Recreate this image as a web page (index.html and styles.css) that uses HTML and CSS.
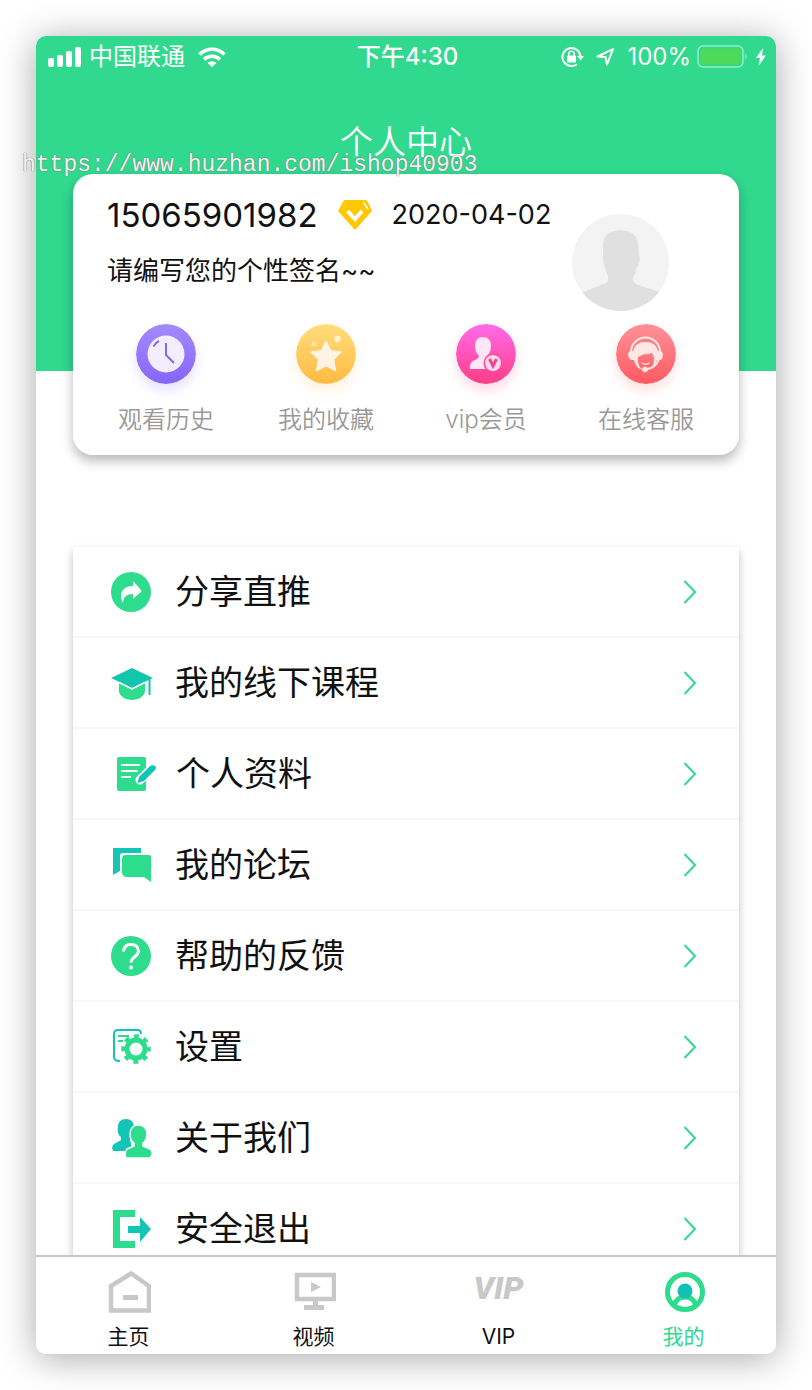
FILE: index.html
```
<!DOCTYPE html>
<html lang="zh-CN">
<head>
  <meta charset="UTF-8">
  <meta name="viewport" content="width=device-width, initial-scale=1.0">
  <title>个人中心</title>
  <link rel="stylesheet" href="styles.css">
</head>
<body>
  <div class="phone">
    <main class="content">
      <header class="header">
        <div class="status-bar">
          <div class="status-left">
            <svg width="34" height="20" viewBox="0 0 34 20" fill="#fff"><rect x="0" y="11" width="6" height="9" rx="2"/><rect x="9" y="8" width="6" height="12" rx="2"/><rect x="18" y="4" width="6" height="16" rx="2"/><rect x="27" y="0" width="6" height="20" rx="2"/></svg>
            <span>中国联通</span>
            <svg class="wifi" width="28" height="20" viewBox="0 0 28 20"><path d="M1.500 7.500a17.500 17.500 0 0 1 25 0M6 12.500a11.500 11.500 0 0 1 16 0" fill="none" stroke="#fff" stroke-width="3.600"/><path d="M9.500 16a6.500 6.500 0 0 1 9 0L14 20z" fill="#fff"/></svg>
          </div>
          <span class="time">下午4:30</span>
          <div class="status-right">
            <svg width="23" height="22" viewBox="0 0 23 22"><path d="M16 18.2A9 9 0 1 1 19.500 11" fill="none" stroke="#fff" stroke-width="2"/><path d="M16 10h7l-3.500 4.500z" fill="#fff"/><rect x="6" y="9.500" width="9" height="7" rx="1" fill="#fff"/><path d="M7.800 10V8a2.700 2.700 0 0 1 5.400 0v2" fill="none" stroke="#fff" stroke-width="1.600"/></svg>
            <svg width="19" height="18" viewBox="0 0 19 18"><path d="M1.500 8.500L17 1.200 11 16.500 9.500 9z" fill="none" stroke="#fff" stroke-width="2" stroke-linejoin="round"/></svg>
            <span>100%</span>
            <span class="power">
              <svg width="50" height="24" viewBox="0 0 50 24"><rect x="1" y="1" width="45" height="21" rx="5" fill="none" stroke="#97edc5" stroke-width="1.500"/><rect x="3.500" y="3.500" width="40" height="16" rx="3" fill="#4fd95b"/><path d="M48 8q3 3.500 0 7z" fill="#97edc5"/></svg>
              <svg width="12" height="20" viewBox="0 0 12 20"><path d="M8 1L1 11h4L3.500 19 11 8.500H7z" fill="#fff"/></svg>
            </span>
          </div>
        </div>
        <h1 class="title">个人中心</h1>
      </header>

      <section class="profile-card">
        <div class="profile">
          <div class="profile-info">
            <div class="account">
              <span class="number">15065901982</span>
              <svg width="34" height="30" viewBox="0 0 34 30"><path d="M7 0h20q2 0 3 2l4 9-17 19L0 11l5-9q1-2 2-2z" fill="#ffc800"/><path d="M9.500 11l7.500 8 7-8" fill="none" stroke="#fff" stroke-width="4"/><path d="M25.500 2.500l4.500 6.500" stroke="#fff" stroke-width="1.400"/></svg>
              <span class="date">2020-04-02</span>
            </div>
            <p class="signature">请编写您的个性签名~~</p>
          </div>
          <svg class="avatar" viewBox="0 0 97 97"><defs><clipPath id="face"><circle cx="48.500" cy="48.500" r="48.500"/></clipPath></defs><circle cx="48.500" cy="48.500" r="48.500" fill="#f3f3f3"/><path clip-path="url(#face)" d="M31 29Q33 17 48 16 65 17 66 29L67 42Q69 44 66 52 65 54 64 54 64 60 61 63V66Q62 69 66 71L82 76Q87 77 92 82V97H5V82Q9 78 14 77L29 71Q35 69 36 67V62Q34 58 33 53 31 50 31 45z" fill="#e0e0e0"/></svg>
        </div>
        <nav class="shortcuts">
          <a href="#">
            <svg class="round history" viewBox="0 0 60 60"><defs><linearGradient id="purple" x2="0" y2="1"><stop stop-color="#a48bfb"/><stop offset="1" stop-color="#8565fb"/></linearGradient></defs><circle cx="30" cy="30" r="30" fill="url(#purple)"/><circle cx="30" cy="30" r="18.500" fill="#f2edff"/><path d="M30 19v12l8 8M17.500 22.500q2-4 5.500-5.500" fill="none" stroke="#8768f5" stroke-width="2"/></svg>
            <span>观看历史</span>
          </a>
          <a href="#">
            <svg class="round favorite" viewBox="0 0 60 60"><defs><linearGradient id="gold" x2="0" y2="1"><stop stop-color="#ffdd7c"/><stop offset="1" stop-color="#ffba42"/></linearGradient></defs><circle cx="30" cy="30" r="30" fill="url(#gold)"/><path d="M30 17l4.800 9.500 10.700 1.500-7.700 7.500 2 11.500-9.800-5-9.800 5 2-11.500-7.700-7.500 10.700-1.500z" fill="#fff3e4" stroke="#fff3e4" stroke-width="1" stroke-linejoin="round"/><circle cx="41.500" cy="15" r="3.200" fill="#fff3d6"/><circle cx="18" cy="20" r="2.500" fill="#ffe7a5"/></svg>
            <span>我的收藏</span>
          </a>
          <a href="#">
            <svg class="round member" viewBox="0 0 60 60"><defs><linearGradient id="pink" x2="0" y2="1"><stop stop-color="#ff6bea"/><stop offset="1" stop-color="#ff3d86"/></linearGradient></defs><circle cx="30" cy="30" r="30" fill="url(#pink)"/><path d="M27 13c5 0 8 3 8 9 0 5-2 8-4 10q0 2 3 3-6 3-4 10H14q-1-7 5-9 4-2 4-4-4-4-4-10 0-9 8-9z" fill="#ffe6f4"/><circle cx="37" cy="39" r="9.500" fill="#ff4898"/><circle cx="37" cy="39" r="8" fill="#ffdcec"/><path d="M33.500 35l3.500 7 3.500-7" fill="none" stroke="#ff4090" stroke-width="3"/></svg>
            <span>vip会员</span>
          </a>
          <a href="#">
            <svg class="round service" viewBox="0 0 60 60"><defs><linearGradient id="coral" x2="0" y2="1"><stop stop-color="#ff9298"/><stop offset="1" stop-color="#ff5961"/></linearGradient></defs><circle cx="30" cy="30" r="30" fill="url(#coral)"/><path d="M15 28a14.500 14.500 0 0 1 29 0" fill="none" stroke="#ffe7e4" stroke-width="2"/><path d="M14 27h3q2-9 12.500-9T42 27h3q2 1 2 4t-2 5h-4q-2 7-6 9 3-4 3-11l-2-5-7 2 2-2-9 4q-1 9 5 13-7-1-9-10h-3q-3-2-3-5t2-4z" fill="#ffe7e4"/><path d="M25 38q4 3 9 0-1 3-4.500 3T25 38z" fill="#ffe7e4"/><path d="M43 35q-3 9-13 10.500" fill="none" stroke="#ffe7e4" stroke-width="2"/><circle cx="29" cy="45.500" r="2.800" fill="#ffe7e4"/></svg>
            <span>在线客服</span>
          </a>
        </nav>
      </section>

      <nav class="menu">
        <a href="#">
          <svg class="menu-icon" viewBox="0 0 44 44"><circle cx="22" cy="22" r="20" fill="#2ddc8c"/><path d="M14 33c-5-10 0-17 10-17v-4q0-1 1 0l7 8q1 1 0 2l-7 6q-1 1-1 0v-4c-6 0-10 3-10 9z" fill="#fff"/></svg>
          <span>分享直推</span>
          <svg class="arrow" viewBox="0 0 14 24"><path d="M1.500 1l10.500 11L1.500 23"/></svg>
        </a>
        <a href="#">
          <svg class="menu-icon" viewBox="0 0 44 44"><path d="M10 21v10q2 7 13 8 11-1 13-8V21l-13 6z" fill="#2ddc8c"/><path d="M2 17L23 7l21 10-21 10z" fill="#12c5ad"/><path d="M10 21.500l13 6.500 13-6.500" fill="none" stroke="#fff" stroke-width="1.500"/><path d="M40.500 18v16" stroke="#12c5ad" stroke-width="2"/></svg>
          <span>我的线下课程</span>
          <svg class="arrow" viewBox="0 0 14 24"><path d="M1.500 1l10.500 11L1.500 23"/></svg>
        </a>
        <a href="#">
          <svg class="menu-icon wide" viewBox="0 0 48 44"><rect x="8" y="5" width="29" height="34" rx="2" fill="#2ddc8c"/><path d="M12 13h19M12 19h17M12 25h10" stroke="#fff" stroke-width="2"/><path d="M31 28L44 15" stroke="#fff" stroke-width="9" stroke-linecap="round"/><path d="M28.500 31l1.500-6L41 14q4-2 6 1 0 2-1 3L35 29z" fill="#12c5b5"/></svg>
          <span>个人资料</span>
          <svg class="arrow" viewBox="0 0 14 24"><path d="M1.500 1l10.500 11L1.500 23"/></svg>
        </a>
        <a href="#">
          <svg class="menu-icon" viewBox="0 0 44 44"><path d="M4 5h28v5H14q-3 0-3 3v15l-7 4z" fill="#12c5b5"/><path d="M17 12h23q2 0 2 2v25l-7-5H18q-5 0-5-5V16q0-4 4-4z" fill="#2ddc8c"/></svg>
          <span>我的论坛</span>
          <svg class="arrow" viewBox="0 0 14 24"><path d="M1.500 1l10.500 11L1.500 23"/></svg>
        </a>
        <a href="#">
          <svg class="menu-icon" viewBox="0 0 44 44"><circle cx="22" cy="22" r="20" fill="#2ddc8c"/><path d="M14.500 17.500Q15 10.500 22 10.500t7.500 6.500q0 3-4 6-3.500 2.500-3.500 5.500" fill="none" stroke="#fff" stroke-width="3"/><circle cx="22" cy="33.500" r="2" fill="#fff"/></svg>
          <span>帮助的反馈</span>
          <svg class="arrow" viewBox="0 0 14 24"><path d="M1.500 1l10.500 11L1.500 23"/></svg>
        </a>
        <a href="#">
          <svg class="menu-icon" viewBox="0 0 44 44"><path d="M32 9q0-4-3-4H9Q5 5 5 9v23q0 4 6 4" fill="none" stroke="#12c5b5" stroke-width="2"/><path d="M9 11h11M9 16h5" stroke="#2ddc8c" stroke-width="2"/><circle cx="27" cy="24" r="9" fill="none" stroke="#2ddc8c" stroke-width="5"/><circle cx="27" cy="24" r="12.500" fill="none" stroke="#2ddc8c" stroke-width="4.500" stroke-dasharray="4.800 5.020" stroke-dashoffset="2.400"/></svg>
          <span>设置</span>
          <svg class="arrow" viewBox="0 0 14 24"><path d="M1.500 1l10.500 11L1.500 23"/></svg>
        </a>
        <a href="#">
          <svg class="menu-icon" viewBox="0 0 44 44"><path d="M17 3c6 0 8 4 8 9 0 4-2 7-4 9v3l3 11H4q-2-4 1-7l7-4v-3c-3-2-4-6-3-10 0-5 3-8 8-8z" fill="#12c5b5"/><path d="M29 9c6 0 9 4 9 10q-1 6-4 8v3l7 3q3 2 2 6l-2 3H17q-2-6 1-9l7-3v-3c-3-2-4-5-4-9 0-5 3-9 8-9z" fill="#2ddc8c" stroke="#fff" stroke-width="1.500"/></svg>
          <span>关于我们</span>
          <svg class="arrow" viewBox="0 0 14 24"><path d="M1.500 1l10.500 11L1.500 23"/></svg>
        </a>
        <a href="#">
          <svg class="menu-icon" viewBox="0 0 44 44"><path d="M4 3h22v7H11v24h15v7H4z" fill="#2ddc8c"/><path d="M19 19h12v-9l11 12-11 13v-9H19z" fill="#12c5b5"/></svg>
          <span>安全退出</span>
          <svg class="arrow" viewBox="0 0 14 24"><path d="M1.500 1l10.500 11L1.500 23"/></svg>
        </a>
      </nav>
    </main>

    <nav class="tab-bar">
      <a href="#">
        <svg class="tab-icon" viewBox="0 0 44 44"><path d="M4 40.500V16L24 3.500 42 16v24.500z" fill="none" stroke="#c8c8c8" stroke-width="4.500"/><path d="M16 27.500h15" stroke="#c8c8c8" stroke-width="5"/></svg>
        <span>主页</span>
      </a>
      <a href="#">
        <svg class="tab-icon" viewBox="0 0 44 44"><path d="M5 5h37v24H5z" fill="none" stroke="#c8c8c8" stroke-width="4.500"/><path d="M19 12l10 5-10 5zM21 31h5v4h6v5H12v-5h9z" fill="#c8c8c8"/></svg>
        <span>视频</span>
      </a>
      <a href="#">
        <b class="vip-mark">VIP</b>
        <span>VIP</span>
      </a>
      <a href="#" class="active">
        <svg class="tab-icon" viewBox="0 0 44 44"><circle cx="23" cy="22" r="17.500" fill="none" stroke="#2ddc8c" stroke-width="5"/><path d="M12 36q2-9 11-9t11 9" fill="none" stroke="#2ddc8c" stroke-width="5"/><circle cx="23" cy="21" r="7.500" fill="#12c1b5"/></svg>
        <span>我的</span>
      </a>
    </nav>
  </div>
  <div class="watermark">https://www.huzhan.com/ishop40903</div>
</body>
</html>
```
FILE: styles.css
```
:root{--green:#30d98e;--light-gray:#f7f7f7}
*{box-sizing:border-box}
body{margin:0;padding:36px;background:#fff;color:#111;font-family:Inter,"Noto Sans CJK SC",sans-serif}
a{color:inherit;text-decoration:none}
svg{display:block;flex:none}
.phone{display:flex;flex-direction:column;height:calc(100vh - 72px);background:#fff;border-radius:10px;overflow:hidden;box-shadow:0 4px 36px rgba(0,0,0,.35)}
.content{flex:1;min-height:0;overflow:hidden}

.header{background:var(--green);color:#fff;padding-bottom:205px}
.status-bar{display:grid;grid-template-columns:1fr auto 1fr;align-items:center;height:42px;padding:0 9px 0 12px;font-size:24px;line-height:40px}
.status-left,.status-right{display:flex;align-items:center;gap:7px}
.status-left .wifi{margin-left:6px}
.status-right{justify-content:flex-end;gap:12px}
.power{display:flex;align-items:center;gap:8px;margin-left:-6px}
.time{font-weight:500}
.title{margin:40px 0 0;text-align:center;font-size:33px;line-height:48px;font-weight:350}

.profile-card{position:relative;margin:-197px 37px 0;padding-bottom:19px;background:#fff;border-radius:20px;box-shadow:0 6px 12px rgba(0,0,0,.28)}
.profile{display:flex;justify-content:space-between;padding:0 70px 0 34px}
.profile-info{padding-top:21px}
.account{display:flex;align-items:center;gap:20px;line-height:40px}
.number{font-size:33px}
.date{font-size:27px}
.signature{margin:16px 0 0;font-size:26px;line-height:40px}
.avatar{width:97px;height:97px;margin-top:40px}
.shortcuts{display:grid;grid-template-columns:repeat(4,1fr);margin-top:13px;padding:0 13px}
.shortcuts a{display:flex;flex-direction:column;align-items:center;gap:20px;color:#999;font-size:24px;line-height:32px;font-weight:350}
.round{width:60px;height:60px;border-radius:50%}
.history{box-shadow:0 6px 12px rgba(133,101,251,.2)}
.favorite{box-shadow:0 6px 12px rgba(255,186,66,.2)}
.member{box-shadow:0 6px 12px rgba(255,61,134,.2)}
.service{box-shadow:0 6px 12px rgba(255,89,97,.2)}

.menu{margin:92px 37px 0;box-shadow:0 4px 8px rgba(0,0,0,.25)}
.menu a{display:flex;align-items:center;height:91px;padding:0 42px 0 36px;border-bottom:2px solid var(--light-gray);font-size:34px;line-height:44px}
.menu span{flex:1;margin-left:22px}
.menu-icon{width:44px;height:44px}
.menu-icon.wide{width:48px;margin-right:-3px}
.arrow{width:14px;height:24px;fill:none;stroke:var(--green);stroke-width:2}

.tab-bar{display:grid;grid-template-columns:repeat(4,1fr);height:99px;background:#fff;border-top:2px solid #c6c6c6}
.tab-bar a{display:flex;flex-direction:column;align-items:center;padding-top:13px;font-size:21px;line-height:32px}
.tab-icon,.vip-mark{height:44px;margin-bottom:7px}
.tab-icon{width:44px}
.vip-mark{font:italic 900 32px/36px Roboto,sans-serif;color:#c8c8c8}
.active{color:var(--green)}

.watermark{position:absolute;top:151px;left:22px;font:23px/28px "Liberation Mono",monospace;color:#f2f2f2;text-shadow:0 0 1px #777,0 0 1px #777}
```
